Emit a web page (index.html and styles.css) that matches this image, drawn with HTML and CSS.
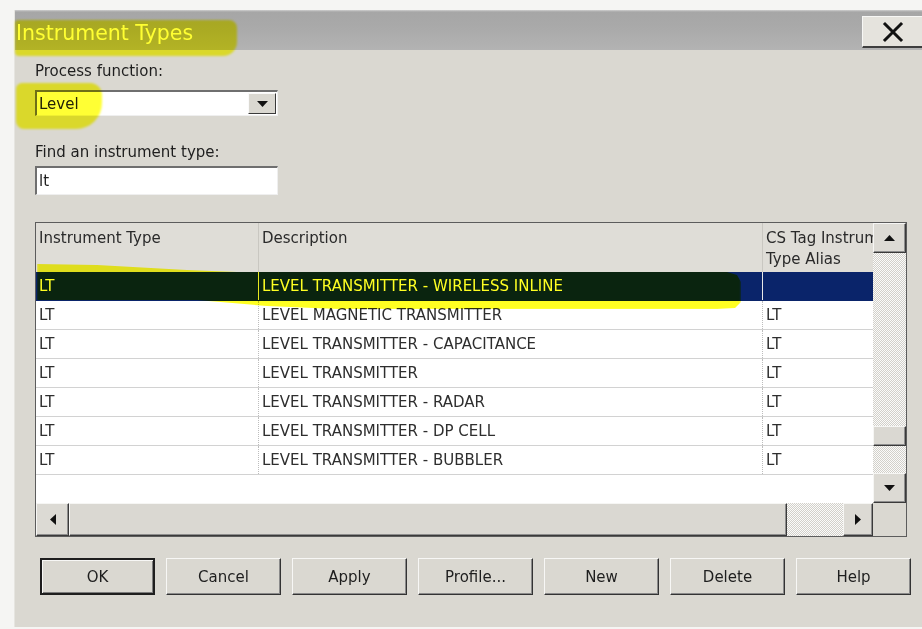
FILE: index.html
```html
<!DOCTYPE html>
<html lang="en">
<head>
<meta charset="utf-8">
<title>Instrument Types</title>
<link rel="stylesheet" href="styles.css">
</head>
<body>
<div class="window">
  <div class="titlebar">
    <span class="title">Instrument Types</span>
    <button class="close" type="button" aria-label="Close">
      <svg width="22" height="22" viewBox="0 0 22 22"><path d="M3 3 L19 19 M19 3 L3 19" stroke="#111" stroke-width="3" stroke-linecap="square"/></svg>
    </button>
  </div>

  <div class="content">
    <label class="field-label">Process function:</label>
    <div class="combo">
      <span class="combo-value">Level</span>
      <span class="combo-btn"><svg width="11" height="6" viewBox="0 0 11 6"><path d="M0 0 H11 L5.5 6 Z" fill="#111"/></svg></span>
    </div>

    <label class="field-label find-label">Find an instrument type:</label>
    <div class="textbox">lt</div>

    <div class="grid-frame">
      <div class="list">
        <div class="list-head">
          <div class="hcell">Instrument Type</div>
          <div class="hcell sep">Description</div>
          <div class="hcell sep clip"><span>CS Tag Instrument</span><span>Type Alias</span></div>
        </div>
        <div class="row selected"><div class="cell">LT</div><div class="cell sep">LEVEL TRANSMITTER - WIRELESS INLINE</div><div class="cell sep"></div></div>
        <div class="row"><div class="cell">LT</div><div class="cell sep">LEVEL MAGNETIC TRANSMITTER</div><div class="cell sep">LT</div></div>
        <div class="row"><div class="cell">LT</div><div class="cell sep">LEVEL TRANSMITTER - CAPACITANCE</div><div class="cell sep">LT</div></div>
        <div class="row"><div class="cell">LT</div><div class="cell sep">LEVEL TRANSMITTER</div><div class="cell sep">LT</div></div>
        <div class="row"><div class="cell">LT</div><div class="cell sep">LEVEL TRANSMITTER - RADAR</div><div class="cell sep">LT</div></div>
        <div class="row"><div class="cell">LT</div><div class="cell sep">LEVEL TRANSMITTER - DP CELL</div><div class="cell sep">LT</div></div>
        <div class="row"><div class="cell">LT</div><div class="cell sep">LEVEL TRANSMITTER - BUBBLER</div><div class="cell sep">LT</div></div>
      </div>

      <div class="vscroll">
        <span class="sbtn sbtn-v"><svg width="11" height="6" viewBox="0 0 11 6"><path d="M0 6 H11 L5.5 0 Z" fill="#111"/></svg></span>
        <span class="track track-top"></span>
        <span class="thumb thumb-v"></span>
        <span class="track track-fill"></span>
        <span class="sbtn sbtn-v"><svg width="11" height="6" viewBox="0 0 11 6"><path d="M0 0 H11 L5.5 6 Z" fill="#111"/></svg></span>
      </div>

      <div class="hscroll">
        <span class="sbtn sbtn-left"><svg width="6" height="11" viewBox="0 0 6 11"><path d="M6 0 V11 L0 5.5 Z" fill="#111"/></svg></span>
        <span class="thumb thumb-h"></span>
        <span class="track track-fill"></span>
        <span class="sbtn sbtn-right"><svg width="6" height="11" viewBox="0 0 6 11"><path d="M0 0 V11 L6 5.5 Z" fill="#111"/></svg></span>
      </div>

      <div class="corner"></div>
    </div>

    <div class="buttons">
      <button class="btn default" type="button">OK</button>
      <button class="btn" type="button">Cancel</button>
      <button class="btn" type="button">Apply</button>
      <button class="btn" type="button">Profile...</button>
      <button class="btn" type="button">New</button>
      <button class="btn" type="button">Delete</button>
      <button class="btn" type="button">Help</button>
    </div>
  </div>

  <!-- highlighter pen strokes laid over the dialog -->
  <div class="marker marker-title"></div>
  <div class="marker marker-level"></div>
  <div class="marker marker-row"></div>
</div>
</body>
</html>
```
FILE: styles.css
```css
* { box-sizing: border-box; }

html, body {
  margin: 0;
  height: 100%;
}

body {
  background: #f5f5f3;
  padding: 10px 0 0 14px;
  font-family: "DejaVu Sans", "Liberation Sans", sans-serif;
  font-size: 15px;
  color: #222;
  overflow: hidden;
}

.window {
  position: relative;
  height: 617px;
  background: #dad8d1;
  border-left: 1px solid #e6e5e0;
}

/* ---- title bar ---- */
.titlebar {
  height: 40px;
  display: flex;
  justify-content: space-between;
  align-items: flex-start;
  background: linear-gradient(#cfcfcf 0, #a6a6a6 2px, #a9a9a9 40%, #b3b3b3 100%);
}

.title {
  font-size: 20.5px;
  line-height: 24px;
  padding: 11px 0 0 1px;
  color: #fffff2;
}

.close {
  width: 60px;
  height: 32px;
  margin-top: 6px;
  padding: 0;
  display: flex;
  align-items: center;
  justify-content: center;
  background: #e5e3dd;
  border: none;
  border-top: 1px solid #f7f7f5;
  border-left: 1px solid #f7f7f5;
  border-bottom: 2px solid #3e3e3e;
}

/* ---- form fields ---- */
.content {
  display: flex;
  flex-direction: column;
  align-items: flex-start;
  padding-left: 20px;
}

.field-label {
  margin-top: 12px;
  line-height: 18px;
  color: #1e1e1e;
}

.find-label { margin-top: 27px; }

.combo {
  margin-top: 10px;
  width: 243px;
  height: 26px;
  display: flex;
  align-items: center;
  justify-content: space-between;
  background: #fff;
  border-top: 2px solid #6f6f6f;
  border-left: 2px solid #6f6f6f;
  border-right: 1px solid #efefef;
  border-bottom: 1px solid #efefef;
}

.combo-value {
  padding-left: 2px;
  line-height: 20px;
}

.combo-btn {
  width: 28px;
  height: 21px;
  margin-right: 1px;
  display: flex;
  align-items: center;
  justify-content: center;
  background: #dad8d1;
  border: 1px solid;
  border-color: #fafafa #3a3a3a #3a3a3a #fafafa;
}

.textbox {
  margin-top: 5px;
  width: 243px;
  height: 29px;
  padding: 3px 0 0 2px;
  line-height: 20px;
  background: #fff;
  border-top: 2px solid #6f6f6f;
  border-left: 2px solid #6f6f6f;
  border-right: 1px solid #efefef;
  border-bottom: 1px solid #efefef;
}

/* ---- list grid with scrollbars ---- */
.grid-frame {
  margin-top: 27px;
  width: 872px;
  height: 315px;
  display: grid;
  grid-template-columns: 837px 1fr;
  grid-template-rows: 280px 1fr;
  background: #fff;
  border: 1px solid #5c5c5c;
}

.list {
  overflow: hidden;
  background: #fff;
}

.list-head,
.row {
  display: grid;
  grid-template-columns: 222px 504px 111px;
}

.list-head {
  height: 49px;
  background: #dfddd7;
}

.hcell {
  padding: 5px 3px 0;
  line-height: 21px;
  color: #2a2a2a;
  white-space: nowrap;
}

.hcell.sep { border-left: 1px solid #c9c7c1; }

.hcell.clip {
  display: flex;
  flex-direction: column;
  overflow: hidden;
}

.row {
  height: 29px;
  border-bottom: 1px solid #d2d2d2;
  color: #2e2e2e;
}

.cell {
  padding-left: 3px;
  line-height: 28px;
  white-space: nowrap;
  overflow: hidden;
}

.cell.sep { border-left: 1px dotted #bdbdbd; }

.row.selected {
  background: #0a246a;
  color: #fff;
  border-bottom-color: #0a246a;
}

.row.selected .cell.sep { border-left: 1px solid #e8e8e8; }

.vscroll {
  display: flex;
  flex-direction: column;
}

.hscroll {
  display: flex;
}

.sbtn {
  display: flex;
  align-items: center;
  justify-content: center;
  background: #dcdad4;
  border: 1px solid;
  border-color: #f6f6f4 #3a3a3a #3a3a3a #f6f6f4;
  box-shadow: inset -1px -1px #8e8e8e;
}

.sbtn-v { height: 30px; }
.sbtn-left { width: 33px; }
.sbtn-right { width: 30px; }

.track {
  background-color: #fbfbfa;
  background-image: repeating-conic-gradient(#d2d0ca 0 25%, #fbfbfa 0 50%);
  background-size: 2px 2px;
}

.track-top { height: 173px; }
.track-fill { flex: 1; }

.thumb {
  background: #dad8d2;
  border: 1px solid;
  border-color: #f6f6f4 #3a3a3a #3a3a3a #f6f6f4;
  box-shadow: inset -1px -1px #8e8e8e;
}

.thumb-v { height: 20px; }
.thumb-h { width: 718px; }

.corner { background: #dad8d1; }

/* ---- dialog buttons ---- */
.buttons {
  display: flex;
  gap: 11px;
  margin: 21px 0 0 5px;
}

.btn {
  width: 115px;
  height: 37px;
  padding: 0;
  font-family: "DejaVu Sans", "Liberation Sans", sans-serif;
  font-size: 15px;
  color: #1e1e1e;
  background: #dad8d1;
  border: 1px solid;
  border-color: #f7f7f5 #333 #333 #f7f7f5;
  box-shadow: inset -1px -1px #8a8a8a;
}

.btn.default {
  border: 2px solid #1e1e1e;
  box-shadow: inset 1px 1px #f7f7f5, inset -1px -1px #7c7c7c;
}

/* ---- highlighter strokes ---- */
.marker {
  position: absolute;
  background: #ffff22;
  mix-blend-mode: multiply;
  opacity: 0.92;
  filter: blur(0.8px);
  pointer-events: none;
}

.marker-title {
  left: 0;
  top: 10px;
  width: 222px;
  height: 36px;
  border-radius: 3px 8px 14px 4px;
}

.marker-level {
  left: 1px;
  top: 73px;
  width: 86px;
  height: 46px;
  border-radius: 6px 12px 26px 8px;
}

.marker-row {
  left: 22px;
  top: 252px;
  width: 704px;
  height: 48px;
  opacity: 1;
  clip-path: polygon(0 2px, 60px 3px, 150px 8px, 200px 10px, 690px 10px, 700px 13px, 704px 20px, 704px 40px, 698px 46px, 680px 47px, 300px 47px, 230px 44px, 160px 38px, 0 38px);
}
```
